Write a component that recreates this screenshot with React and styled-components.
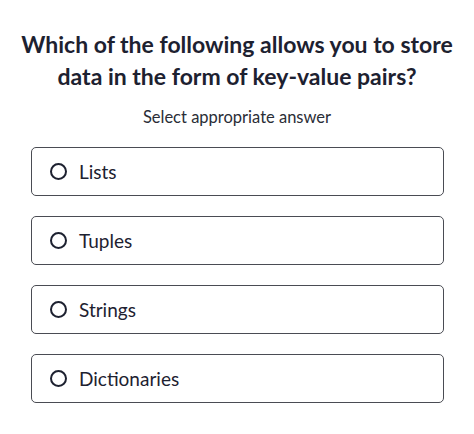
import React from 'react'
import styled, { createGlobalStyle } from 'styled-components'

const GlobalStyle = createGlobalStyle`
  html, body { margin: 0; padding: 0; background: #fff; }
  body { font-family: Lato, "Liberation Sans", sans-serif; color: #1d2130; }
`

const options = ['Lists', 'Tuples', 'Strings', 'Dictionaries']

export default function App() {
  return (
    <Page>
      <GlobalStyle />
      <Question>Which of the following allows you to store data in the form of key-value pairs?</Question>
      <Hint>Select appropriate answer</Hint>
      <Options>
        {options.map(o => (
          <Option key={o}>
            <Radio />
            <Label>{o}</Label>
          </Option>
        ))}
      </Options>
    </Page>
  )
}

const Page = styled.div`
  width: 474px;
  padding-top: 28px;
  display: flex;
  flex-direction: column;
  align-items: center;`

const Question = styled.h1`
  margin: 0;
  width: 450px;
  text-align: center;
  font-size: 23px;
  line-height: 32px;
  font-weight: 700;
  color: #1d2130;`

const Hint = styled.p`
  margin: 15px 0 0;
  font-size: 16.5px;
  line-height: 20px;
  color: #2a2d36;`

const Options = styled.div`
  margin-top: 20px;
  width: 413px;
  margin-left: 1px;
  display: flex;
  flex-direction: column;
  gap: 20px;`

const Option = styled.div`
  height: 49px;
  box-sizing: border-box;
  border: 1.5px solid #4a4c53;
  border-radius: 5px;
  display: flex;
  align-items: center;
  padding-left: 18px;
  gap: 12px;`

const Radio = styled.span`
  width: 17px;
  height: 17px;
  box-sizing: border-box;
  border: 2px solid #1d2130;
  border-radius: 50%;`

const Label = styled.span`
  font-size: 19px;
  color: #1d2130;`
